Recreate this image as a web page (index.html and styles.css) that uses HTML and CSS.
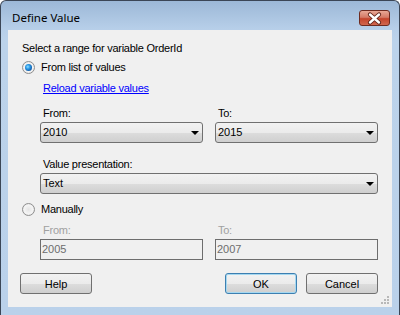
FILE: index.html
```html
<!DOCTYPE html>
<html lang="en">

<head>
    <meta charset="UTF-8">
    <title>Define Value</title>
    <link rel="stylesheet" href="styles.css">
</head>

<body>
    <div class="window">
        <div class="titlebar">
            <span class="title">Define Value</span>
            <div class="close-button">
                <svg width="31" height="16" viewBox="0 0 31 16">
                    <path d="M11 4.5 L20 12.5 M20 4.5 L11 12.5" stroke="#5a1f14" stroke-width="4.2" stroke-linecap="round" />
                    <path d="M11 4.5 L20 12.5 M20 4.5 L11 12.5" stroke="#ffffff" stroke-width="2.4" stroke-linecap="round" />
                </svg>
            </div>
        </div>

        <div class="client">
            <div class="prompt">Select a range for variable OrderId</div>

            <div class="radio-row">
                <span class="radio checked"></span>
                <span>From list of values</span>
            </div>

            <div class="indent">
                <a href="#" class="link">Reload variable values</a>

                <div class="pair">
                    <div class="field">
                        <div class="label">From:</div>
                        <div class="combo"><span>2010</span><span class="arrow"></span></div>
                    </div>
                    <div class="field">
                        <div class="label">To:</div>
                        <div class="combo"><span>2015</span><span class="arrow"></span></div>
                    </div>
                </div>

                <div class="label value-label">Value presentation:</div>
                <div class="combo"><span>Text</span><span class="arrow"></span></div>
            </div>

            <div class="radio-row manual-row">
                <span class="radio"></span>
                <span>Manually</span>
            </div>

            <div class="indent">
                <div class="pair manual-pair">
                    <div class="field">
                        <div class="label disabled">From:</div>
                        <div class="textbox">2005</div>
                    </div>
                    <div class="field">
                        <div class="label disabled">To:</div>
                        <div class="textbox">2007</div>
                    </div>
                </div>
            </div>

            <div class="buttons">
                <button type="button" class="button">Help</button>
                <span class="spacer"></span>
                <button type="button" class="button default">OK</button>
                <button type="button" class="button">Cancel</button>
            </div>

            <svg class="grip" width="9" height="9" viewBox="0 0 9 9">
                <g fill="#b8b8b8">
                    <rect x="6" y="0" width="2" height="2" />
                    <rect x="3" y="3" width="2" height="2" />
                    <rect x="6" y="3" width="2" height="2" />
                    <rect x="0" y="6" width="2" height="2" />
                    <rect x="3" y="6" width="2" height="2" />
                    <rect x="6" y="6" width="2" height="2" />
                </g>
            </svg>
        </div>
    </div>
</body>

</html>
```

FILE: styles.css
```css
body {
    margin: 0;
    padding: 0;
    background-color: #ffffff;
}

.window {
    width: 400px;
    height: 315px;
    box-sizing: border-box;
    border: 1px solid #3b4656;
    border-bottom: 0;
    border-radius: 6px 6px 0 0;
    background: linear-gradient(to bottom, #9cb8d7 0, #b7cfe9 28px, #bcd3eb 40px, #bad1ea 100%);
    display: flex;
    flex-direction: column;
    font-family: "Liberation Sans", Arial, sans-serif;
    font-size: 11px;
    color: #000000;
}

/* Title bar */
.titlebar {
    height: 29px;
    display: flex;
    align-items: flex-start;
    padding: 0 9px 0 11px;
}

.title {
    font-family: "Noto Sans", "Open Sans", sans-serif;
    font-size: 11.5px;
    line-height: 16px;
    margin-top: 9px;
    flex: 1;
}

.close-button {
    width: 31px;
    height: 16px;
    margin-top: 9px;
    box-sizing: border-box;
    border: 1px solid #6e2b20;
    border-radius: 3px;
    background: linear-gradient(to bottom, #e8a896 0, #d47b67 45%, #c4452c 55%, #d0674f 100%);
    display: flex;
    align-items: center;
    justify-content: center;
}

.close-button svg {
    display: block;
    margin: -1px;
}

/* Client area */
.client {
    position: relative;
    flex: 1;
    margin: 0 7px 8px 7px;
    padding: 12px 14px 0 14px;
    background-color: #f0f0f0;
    line-height: 13px;
    letter-spacing: -0.25px;
}

.radio-row {
    display: flex;
    align-items: center;
    height: 13px;
    margin-top: 6px;
}

.manual-row {
    margin-top: 9px;
}

.radio {
    width: 13px;
    height: 13px;
    box-sizing: border-box;
    border: 1px solid #8f8f8f;
    border-radius: 50%;
    background: radial-gradient(circle at 50% 50%, #e4e4e4 0, #f4f4f4 55%, #d6d6d6 100%);
    margin-right: 6px;
    position: relative;
}

.radio.checked::after {
    content: "";
    position: absolute;
    left: 2px;
    top: 2px;
    width: 7px;
    height: 7px;
    border-radius: 50%;
    background: radial-gradient(circle at 40% 40%, #8fe0ff 0, #2a9ae8 35%, #0d4f9c 80%, #123a70 100%);
}

.indent {
    padding-left: 18px;
}

.link {
    display: block;
    margin-top: 8px;
    margin-left: 3px;
    color: #0000ff;
    text-decoration: underline;
    width: max-content;
}

.pair {
    display: flex;
    gap: 12px;
    margin-top: 12px;
}

.manual-pair {
    margin-top: 8px;
}

.field {
    flex: 1;
}

.label {
    padding-left: 3px;
}

.label.disabled {
    color: #a0a0a0;
}

.value-label {
    margin-top: 15px;
}

.combo {
    height: 21px;
    margin-top: 2px;
    box-sizing: border-box;
    border: 1px solid #707070;
    border-radius: 3px;
    background: linear-gradient(to bottom, #f2f2f2 0, #ebebeb 50%, #dddddd 50%, #cfcfcf 100%);
    display: flex;
    align-items: center;
    justify-content: space-between;
    padding: 0 3px 0 2px;
    letter-spacing: 0;
}

.arrow {
    width: 0;
    height: 0;
    border-left: 4px solid transparent;
    border-right: 4px solid transparent;
    border-top: 4px solid #000000;
}

.textbox {
    height: 21px;
    margin-top: 2px;
    box-sizing: border-box;
    border: 1px solid #6d6d6d;
    background-color: #f0f0f0;
    color: #6d6d6d;
    padding-left: 1px;
    line-height: 19px;
    letter-spacing: 0;
}

/* Dialog buttons */
.buttons {
    display: flex;
    margin-top: 13px;
    margin-left: -2px;
}

.spacer {
    flex: 1;
}

.button {
    width: 72px;
    height: 21px;
    box-sizing: border-box;
    border: 1px solid #707070;
    border-radius: 3px;
    background: linear-gradient(to bottom, #f2f2f2 0, #ebebeb 50%, #dddddd 50%, #cfcfcf 100%);
    font-family: "Liberation Sans", Arial, sans-serif;
    font-size: 11px;
    color: #000000;
    padding: 0;
}

.button.default {
    border-color: #3c7fb1;
    box-shadow: inset 0 0 0 1px #a6d8f0;
    margin-right: 9px;
}

.grip {
    position: absolute;
    right: 2px;
    bottom: 2px;
}
```
